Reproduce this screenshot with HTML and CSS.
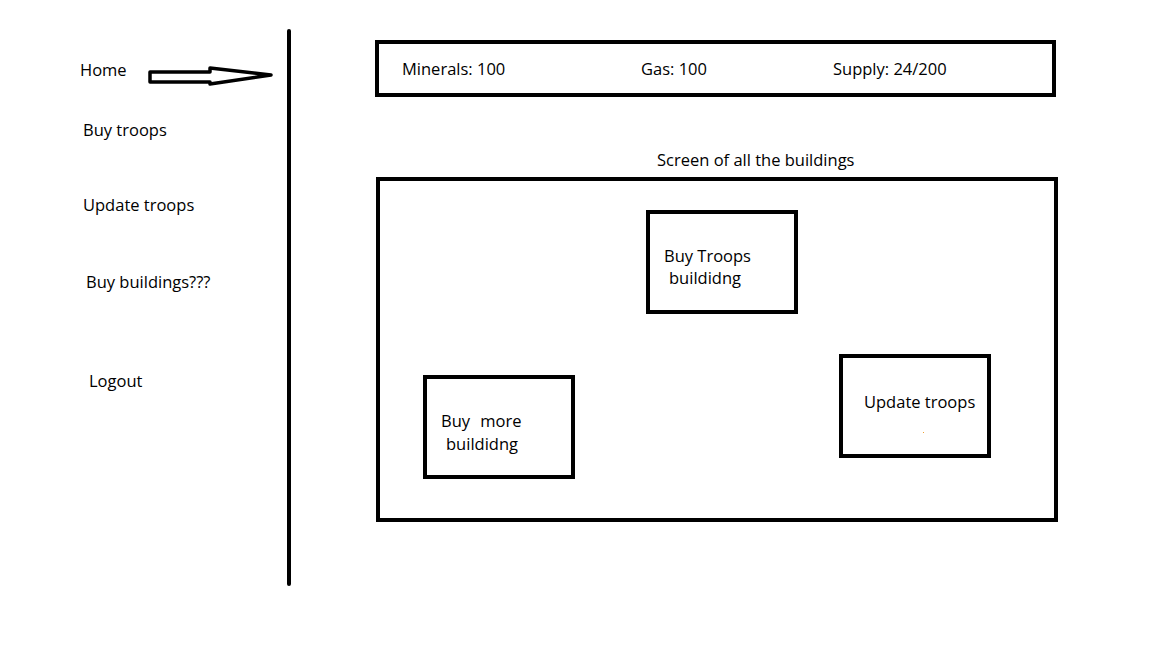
FILE: index.html
```html
<!DOCTYPE html>
<html lang="en">

<head>
    <meta charset="UTF-8">
    <meta name="viewport" content="width=device-width, initial-scale=1.0">
    <title>Base</title>
    <link rel="stylesheet" href="styles.css">
</head>

<body>
    <div id="page">
        <nav id="sidebar">
            <div class="nav-item nav-home">
                <span class="home-label">Home</span>
                <svg class="arrow" width="128" height="24" viewBox="0 0 128 24">
                    <path d="M3 8 L63 8 L63 4 L124 11 L63 20 L63 18 L3 18 Z" fill="#fff" stroke="#000" stroke-width="3.5" stroke-linejoin="round"/>
                </svg>
            </div>
            <div class="nav-item nav-buy">Buy troops</div>
            <div class="nav-item nav-update">Update troops</div>
            <div class="nav-item nav-buildings">Buy buildings???</div>
            <div class="nav-item nav-logout">Logout</div>
        </nav>

        <div id="divider"></div>

        <main id="content">
            <div id="resources">
                <div class="resource resource-minerals">Minerals: 100</div>
                <div class="resource resource-gas">Gas: 100</div>
                <div class="resource resource-supply">Supply: 24/200</div>
            </div>

            <div id="caption">Screen of all the buildings</div>

            <div id="buildings">
                <div class="building building-troops">
                    <div class="building-line">Buy Troops</div>
                    <div class="building-line indent">buildidng</div>
                </div>
                <div class="building building-more">
                    <div class="building-line">Buy <span class="gap">more</span></div>
                    <div class="building-line indent">buildidng</div>
                </div>
                <div class="building building-update">
                    <div class="building-line">Update troops</div>
                    <span class="speck"></span>
                </div>
            </div>
        </main>
    </div>
</body>

</html>
```

FILE: styles.css
```css
body {
    margin: 0;
    background-color: #fff;
    color: #000;
    font-family: "Open Sans", Lato, sans-serif;
    font-size: 16.5px;
}

#page {
    display: flex;
    padding-top: 29px;
}

#sidebar {
    width: 207px;
    padding-left: 80px;
    display: flex;
    flex-direction: column;
}

.nav-item {
    line-height: 20px;
    white-space: nowrap;
}

.nav-home {
    margin-top: 31px;
    display: flex;
    align-items: flex-start;
    height: 28px;
}

.home-label {
    width: 46px;
}

.arrow {
    display: block;
    margin-top: 4px;
    margin-left: 21px;
}

.nav-buy {
    margin-top: 32px;
    margin-left: 3px;
}

.nav-update {
    margin-top: 55px;
    margin-left: 3px;
}

.nav-buildings {
    margin-top: 57px;
    margin-left: 6px;
}

.nav-logout {
    margin-top: 79px;
    margin-left: 9px;
}

#divider {
    width: 4px;
    height: 557px;
    background-color: #000;
    border-radius: 2px;
}

#content {
    margin-left: 84px;
    padding-top: 11px;
}

#resources {
    box-sizing: border-box;
    width: 681px;
    height: 57px;
    border: 4px solid #000;
    display: flex;
    align-items: center;
    padding-left: 23px;
}

.resource-minerals {
    width: 239px;
}

.resource-gas {
    width: 192px;
}

#caption {
    margin-top: 53px;
    margin-left: 282px;
    line-height: 20px;
}

#buildings {
    position: relative;
    box-sizing: border-box;
    width: 682px;
    height: 345px;
    margin-top: 7px;
    margin-left: 1px;
    border: 4px solid #000;
}

.building {
    position: absolute;
    box-sizing: border-box;
    width: 152px;
    height: 104px;
    border: 4px solid #000;
    padding: 31px 0 0 14px;
    white-space: nowrap;
}

.building-line {
    line-height: 22px;
}

.indent {
    margin-left: 5px;
}

.gap {
    margin-left: 6px;
}

.building-troops {
    left: 266px;
    top: 29px;
}

.building-more {
    left: 43px;
    top: 194px;
    padding-top: 31px;
}

.building-more .building-line + .building-line {
    margin-top: 1px;
}

.building-update {
    left: 459px;
    top: 173px;
    padding: 33px 0 0 21px;
}

.speck {
    position: absolute;
    left: 80px;
    top: 74px;
    width: 1px;
    height: 1px;
    background-color: #f0a030;
}
```
